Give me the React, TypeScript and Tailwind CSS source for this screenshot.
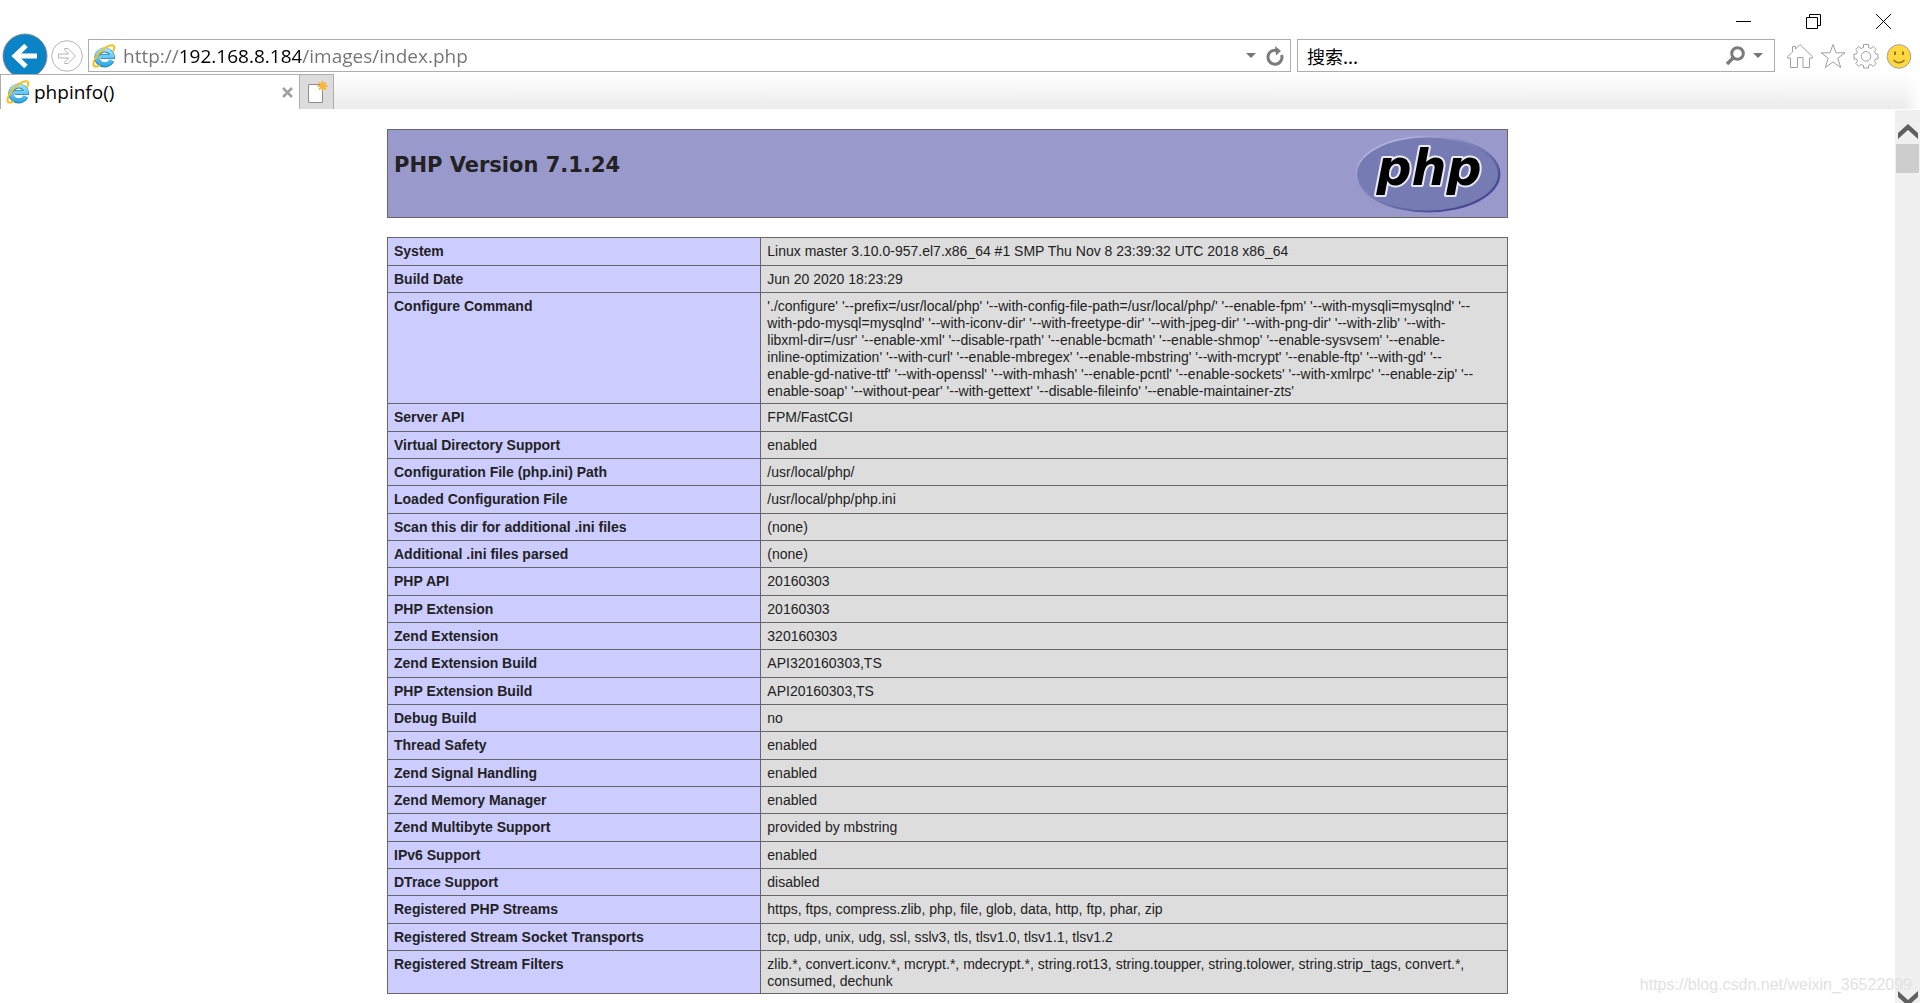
const configureCommand = [
  "'./configure' '--prefix=/usr/local/php' '--with-config-file-path=/usr/local/php/' '--enable-fpm' '--with-mysqli=mysqlnd' '--",
  "with-pdo-mysql=mysqlnd' '--with-iconv-dir' '--with-freetype-dir' '--with-jpeg-dir' '--with-png-dir' '--with-zlib' '--with-",
  "libxml-dir=/usr' '--enable-xml' '--disable-rpath' '--enable-bcmath' '--enable-shmop' '--enable-sysvsem' '--enable-",
  "inline-optimization' '--with-curl' '--enable-mbregex' '--enable-mbstring' '--with-mcrypt' '--enable-ftp' '--with-gd' '--",
  "enable-gd-native-ttf' '--with-openssl' '--with-mhash' '--enable-pcntl' '--enable-sockets' '--with-xmlrpc' '--enable-zip' '--",
  "enable-soap' '--without-pear' '--with-gettext' '--disable-fileinfo' '--enable-maintainer-zts'",
].join("\n");

const infoRows = [
  ["System", "Linux master 3.10.0-957.el7.x86_64 #1 SMP Thu Nov 8 23:39:32 UTC 2018 x86_64"],
  ["Build Date", "Jun 20 2020 18:23:29"],
  ["Configure Command", configureCommand],
  ["Server API", "FPM/FastCGI"],
  ["Virtual Directory Support", "enabled"],
  ["Configuration File (php.ini) Path", "/usr/local/php/"],
  ["Loaded Configuration File", "/usr/local/php/php.ini"],
  ["Scan this dir for additional .ini files", "(none)"],
  ["Additional .ini files parsed", "(none)"],
  ["PHP API", "20160303"],
  ["PHP Extension", "20160303"],
  ["Zend Extension", "320160303"],
  ["Zend Extension Build", "API320160303,TS"],
  ["PHP Extension Build", "API20160303,TS"],
  ["Debug Build", "no"],
  ["Thread Safety", "enabled"],
  ["Zend Signal Handling", "enabled"],
  ["Zend Memory Manager", "enabled"],
  ["Zend Multibyte Support", "provided by mbstring"],
  ["IPv6 Support", "enabled"],
  ["DTrace Support", "disabled"],
  ["Registered PHP Streams", "https, ftps, compress.zlib, php, file, glob, data, http, ftp, phar, zip"],
  ["Registered Stream Socket Transports", "tcp, udp, unix, udg, ssl, sslv3, tls, tlsv1.0, tlsv1.1, tlsv1.2"],
  [
    "Registered Stream Filters",
    "zlib.*, convert.iconv.*, mcrypt.*, mdecrypt.*, string.rot13, string.toupper, string.tolower, string.strip_tags, convert.*,\nconsumed, dechunk",
  ],
];

function IeLogo() {
  return (
    <svg viewBox="0 0 24 24" className="h-6 w-6 shrink-0">
      <defs>
        <linearGradient id="ieBlue" x1="0" y1="0" x2="0" y2="1">
          <stop offset="0" stopColor="#9be2fc" />
          <stop offset="1" stopColor="#35aee8" />
        </linearGradient>
      </defs>
      <path
        d="M19.800 16.500a7.800 7.400 0 1 1 .6-4H8.500"
        fill="none"
        stroke="#2387c4"
        strokeWidth="5"
      />
      <path
        d="M19.500 16.500a7.800 7.400 0 1 1 .9-4H8.500"
        fill="none"
        stroke="url(#ieBlue)"
        strokeWidth="3.6"
      />
      <path
        d="M21.500 6.500C23 3 22.500 1 19.500 1.300 13 2 2 12.500 1.500 20c-.1 3 2.500 3.200 5.500 1.600"
        fill="none"
        stroke="#f9bd16"
        strokeWidth="2"
        strokeLinecap="round"
      />
    </svg>
  );
}

function PhpLogo() {
  return (
    <svg viewBox="0 0 146 78" className="h-[78px] w-[146px]" role="img" aria-label="PHP logo">
      <defs>
        <linearGradient id="phpRim" x1="0" y1="0" x2="1" y2="1">
          <stop offset="0.15" stopColor="#b4b4dc" />
          <stop offset="0.5" stopColor="#777bb3" />
          <stop offset="0.8" stopColor="#484893" />
        </linearGradient>
      </defs>
      <ellipse cx="73" cy="39" rx="72.500" ry="38.500" fill="url(#phpRim)" />
      <ellipse cx="72.500" cy="39" rx="70.500" ry="36.500" fill="#777bb3" />
      <text
        x="74"
        y="50"
        textAnchor="middle"
        fontFamily="DejaVu Sans, Verdana, sans-serif"
        fontSize="49"
        fontWeight="700"
        fontStyle="italic"
        fill="#000"
        stroke="#e9e9f2"
        strokeWidth="4"
        strokeLinejoin="round"
        paintOrder="stroke"
      >
        php
      </text>
    </svg>
  );
}

function WindowControls() {
  return (
    <div className="flex h-[39px] items-start justify-end gap-[55px] pt-[14px] pr-[29px]">
      <button aria-label="Minimize">
        <svg viewBox="0 0 15 15" className="h-[15px] w-[15px]" stroke="#000">
          <path d="M0 7.500h15" />
        </svg>
      </button>
      <button aria-label="Restore">
        <svg viewBox="0 0 15 15" className="h-[15px] w-[15px]" fill="none" stroke="#000">
          <path d="M.5 3.500h11v11H.5zM3.500 3.500v-3h11v11h-3" />
        </svg>
      </button>
      <button aria-label="Close">
        <svg viewBox="0 0 15 15" className="h-[15px] w-[15px]" stroke="#000">
          <path d="M0 0l15 15M15 0L0 15" />
        </svg>
      </button>
    </div>
  );
}

function Caret() {
  return (
    <svg viewBox="0 0 10 5" className="h-[5px] w-[10px]" fill="#767676">
      <path d="M0 0h10L5 5z" />
    </svg>
  );
}

function NavigationBar() {
  return (
    <div className="flex h-[35px] items-start pr-2">
      <div className="flex h-[33px] items-center gap-[3px] pr-[5px] pl-[2px]">
        <button aria-label="Back">
          <svg viewBox="0 0 46 46" className="h-[46px] w-[46px]" fill="none">
            <circle cx="23" cy="23" r="22" fill="#0a84c6" stroke="#8a8a8a" />
            <path d="M35 23H13M24 12.500L13 23l11 10.500" stroke="#fff" strokeWidth="5" />
          </svg>
        </button>
        <button aria-label="Forward">
          <svg viewBox="0 0 32 32" className="h-8 w-8" fill="none" stroke="#b4b4b4">
            <circle cx="16" cy="16" r="15.300" />
            <path d="M7.500 14h10l-4-4.500V8.500h3.500l7.500 7.500-7.500 7.500h-3.500v-1l4-4.500h-10z" />
          </svg>
        </button>
      </div>
      <form className="flex h-[33px] flex-1 items-center border border-[#adadad] pr-[6px] pl-[3px]">
        <IeLogo />
        <input
          aria-label="Address"
          defaultValue="http://192.168.8.184/images/index.php"
          className="ml-[7px] h-full min-w-0 flex-1 bg-[linear-gradient(90deg,#737373_57px,#000_57px,#000_178px,#737373_178px)] bg-clip-text font-['Open_Sans',sans-serif] text-[19px] text-transparent outline-none"
        />
        <button type="button" aria-label="Show address list">
          <Caret />
        </button>
        <button type="button" aria-label="Refresh" className="ml-[10px]">
          <svg viewBox="0 0 18 20" className="h-5 w-[18px]" fill="none">
            <path d="M15.600 9a7 7 0 1 1-5-4.600" stroke="#7b7b7b" strokeWidth="3" />
            <path d="M9 0l6 5-5 4.500z" fill="#7b7b7b" />
          </svg>
        </button>
      </form>
      <form className="ml-[6px] flex h-[33px] w-[478px] items-center border border-[#adadad] pr-[11px] pl-[9px]">
        <input
          aria-label="搜索"
          placeholder="搜索..."
          className="h-full min-w-0 flex-1 font-['Noto_Sans_CJK_SC',sans-serif] text-[18px] outline-none placeholder:text-black"
        />
        <button type="button" aria-label="Search">
          <svg viewBox="0 0 20 20" className="h-5 w-5" fill="none" stroke="#7b7b7b">
            <circle cx="12.500" cy="7.500" r="5.800" strokeWidth="3" />
            <path d="M8.500 11.500L2 18" strokeWidth="3.500" />
          </svg>
        </button>
        <button type="button" aria-label="Search options" className="ml-2">
          <Caret />
        </button>
      </form>
      <div className="ml-3 flex h-[33px] items-center gap-[7px]">
        <button aria-label="Home">
          <svg viewBox="0 0 26 26" className="h-[26px] w-[26px]" fill="none" stroke="#a0a0a0">
            <path d="M3.500 15H.7v-1.500L5.500 9V3.500h3V6L13 1.500l12.300 12V15h-2.800v9.500H16V14.500h-5.500v10H3.500z" />
          </svg>
        </button>
        <button aria-label="Favorites">
          <svg viewBox="0 0 26 26" className="h-[26px] w-[26px]" fill="none" stroke="#a0a0a0">
            <path d="M13 1.500l3 8.300h9l-7.200 5.400 2.900 9.300L13 19l-7.700 5.500 2.900-9.300L1 9.800h9z" />
          </svg>
        </button>
        <button aria-label="Tools">
          <svg viewBox="0 0 26 26" className="h-[26px] w-[26px]" fill="none" stroke="#a0a0a0">
            <path d="M10.500 1.500h5v3l2.500 1 2.200-2.100 3 3-1.700 2.100 1 2.500H25v5h-2.500l-1 2.200 1.700 2.200-3 3-2.200-1.900-2.500 1v2.500h-5v-2.500l-2.500-1-2.200 1.900-3-3 1.700-2.200-1-2.200H1v-5h2.500l1-2.500-1.700-2.100 3-3L8 5.500l2.500-1z" />
            <circle cx="13" cy="13.300" r="4.800" />
          </svg>
        </button>
        <button aria-label="Feedback">
          <svg viewBox="0 0 26 26" className="h-[26px] w-[26px]" fill="none">
            <circle cx="13" cy="13.500" r="11.800" fill="#ffd83d" stroke="#a0a0a0" />
            <path d="M9 8.500v3.500M17 8.500v3.500" stroke="#8f7a2c" strokeWidth="2" />
            <path d="M7.500 17c3 3.600 8 3.600 11 0" stroke="#8f7a2c" strokeWidth="1.500" />
          </svg>
        </button>
      </div>
    </div>
  );
}

function TabBar() {
  return (
    <div className="relative flex h-[35px] bg-white">
      <div className="flex w-[299px] items-center border-t border-l border-[#adadad] bg-white pr-[6px] pl-[5px]">
        <IeLogo />
        <span className="ml-1 flex-1 font-['Open_Sans',sans-serif] text-[19px] leading-6 text-black">
          phpinfo()
        </span>
        <button aria-label="Close tab">
          <svg viewBox="0 0 11 11" className="h-[11px] w-[11px]" stroke="#a0a0a0" strokeWidth="2.500">
            <path d="M1 1l9 9M10 1l-9 9" />
          </svg>
        </button>
      </div>
      <button
        aria-label="New tab"
        className="flex w-[35px] items-center justify-center border border-b-0 border-[#adadad] bg-[#dcdcdc]"
      >
        <svg viewBox="0 0 22 24" className="h-6 w-[22px]" fill="none">
          <path d="M2.500 4.500h14v18h-14z" fill="#fff" stroke="#8c8c8c" />
          <path
            d="M16.500 1v10M11.500 6h10M13 2.500l7 7M20 2.500l-7 7"
            stroke="#f9a825"
            strokeWidth="1.500"
          />
          <circle cx="16.500" cy="6" r="3" fill="#ffb52e" />
        </svg>
      </button>
      <div className="flex-1 bg-linear-to-b from-white to-[#ebebeb] mask-r-from-99%" />
    </div>
  );
}

function ScrollBar() {
  return (
    <div className="mt-px flex w-[25px] flex-col items-center bg-[#f0f0f0]">
      <button aria-label="Scroll up" className="flex h-[34px] items-end pb-[5px]">
        <svg viewBox="0 0 20 15" className="h-[15px] w-5" fill="#606060">
          <path d="M10 0l10 9v6L10 6 0 15V9z" />
        </svg>
      </button>
      <div className="h-[29px] w-[23px] bg-[#cdcdcd]" />
      <button aria-label="Scroll down" className="mt-auto flex h-3 items-start overflow-hidden">
        <svg viewBox="0 0 20 15" className="h-[15px] w-5 shrink-0" fill="#606060">
          <path d="M10 15L0 6V0l10 9 10-9v6z" />
        </svg>
      </button>
    </div>
  );
}

function PhpInfo() {
  return (
    <main className="min-w-0 flex-1 overflow-hidden pt-5 font-['Liberation_Sans',Arial,sans-serif] text-[14px] leading-[17px] text-[#222]">
      <div className="mx-auto flex h-[89px] max-w-[1121px] items-start justify-between border border-[#666] bg-[#9999cc] pt-[5px] pr-[6px] pl-[6px]">
        <h1 className="mt-4 font-['DejaVu_Sans',Verdana,sans-serif] text-[21px] leading-7 font-bold">
          PHP Version 7.1.24
        </h1>
        <a href="#php">
          <PhpLogo />
        </a>
      </div>
      <table className="mx-auto mt-[19px] w-full max-w-[1121px] table-fixed border-collapse">
        <colgroup>
          <col className="w-1/3" />
          <col />
        </colgroup>
        <tbody>
          {infoRows.map(([name, value]) => (
            <tr key={name} className="h-[27px] nth-[3n+1]:h-[28px]">
              <th
                scope="row"
                className="border border-[#666] bg-[#ccccff] px-[6px] pt-[5px] pb-[3px] text-left align-top font-bold"
              >
                {name}
              </th>
              <td className="border border-[#666] bg-[#dddddd] px-[6px] pt-[5px] pb-[3px] align-top whitespace-pre-line">
                {value}
              </td>
            </tr>
          ))}
        </tbody>
      </table>
    </main>
  );
}

export default function App() {
  return (
    <div className="relative flex h-screen flex-col overflow-hidden bg-white">
      <header>
        <WindowControls />
        <NavigationBar />
        <TabBar />
      </header>
      <div className="flex min-h-0 flex-1">
        <PhpInfo />
        <ScrollBar />
      </div>
      <p className="absolute right-2 bottom-2 font-['Liberation_Sans',Arial,sans-serif] text-[16px] leading-5 text-[#e2e2e2]">
        https://blog.csdn.net/weixin_36522099
      </p>
    </div>
  );
}
